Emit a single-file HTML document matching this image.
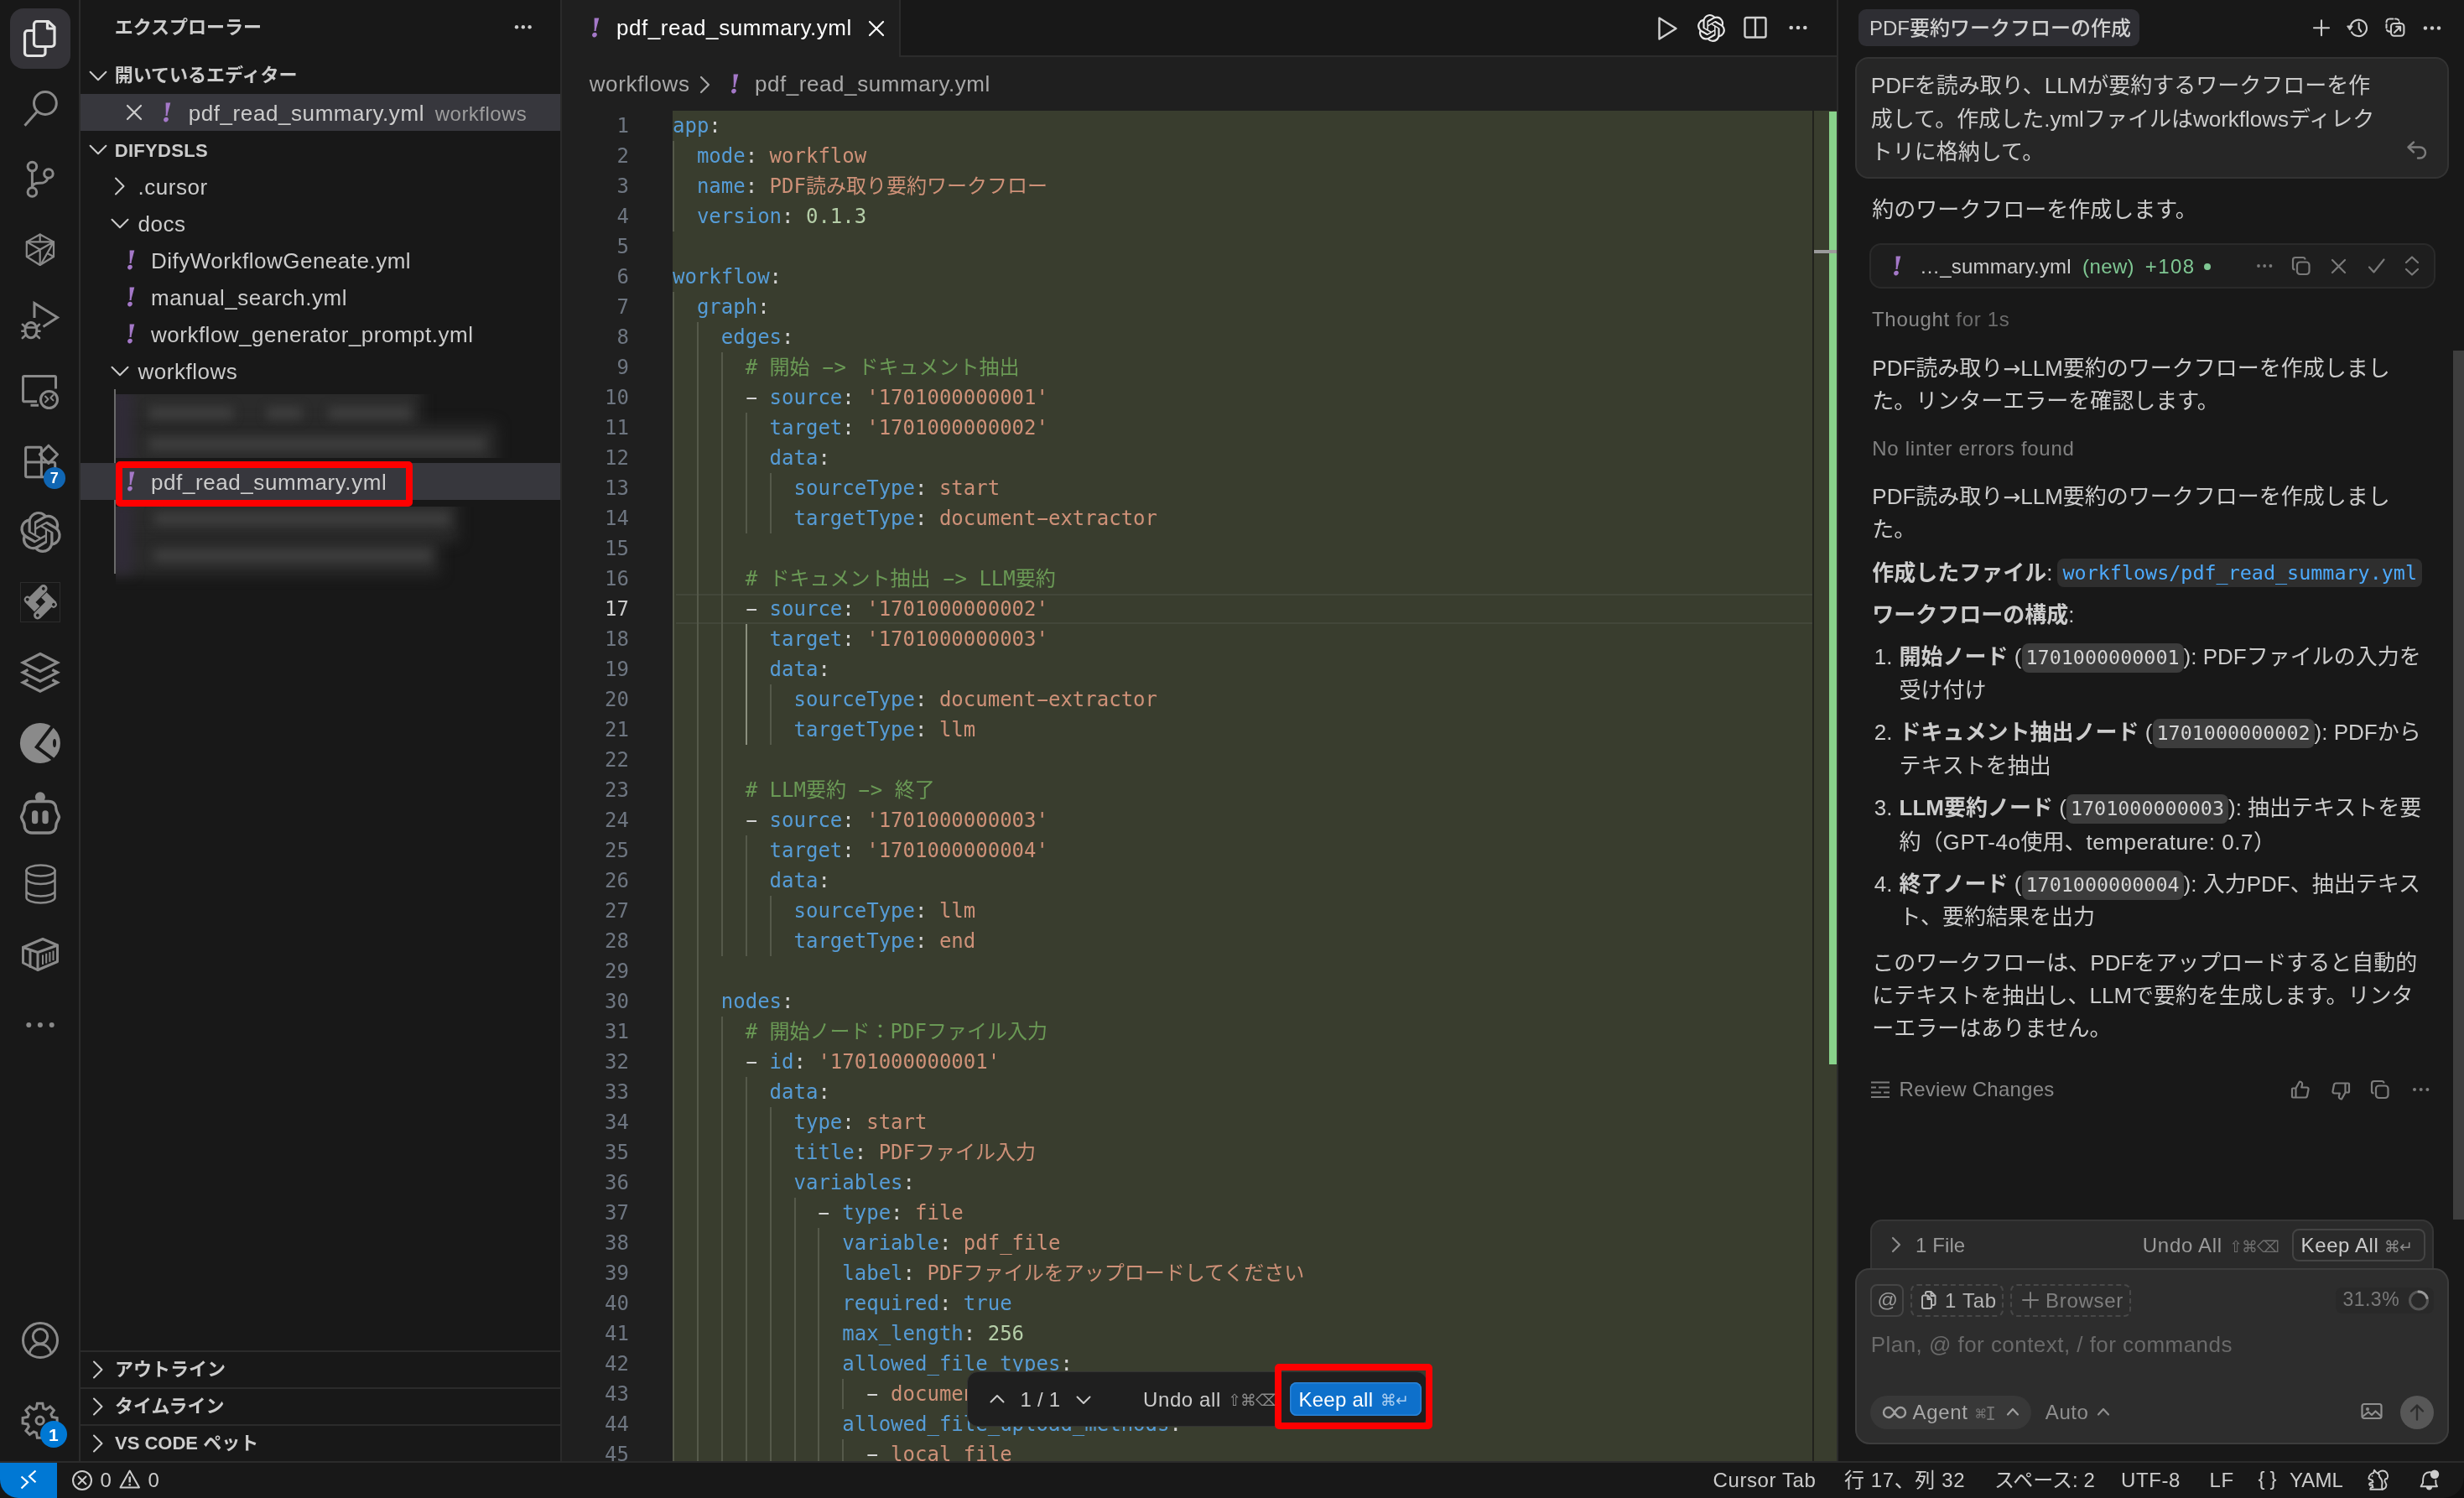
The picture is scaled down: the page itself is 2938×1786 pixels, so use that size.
<!DOCTYPE html>
<html lang="ja"><head><meta charset="utf-8"><title>pdf_read_summary.yml</title>
<style>
*{box-sizing:border-box;margin:0;padding:0}
html,body{width:2938px;height:1786px;overflow:hidden;background:#181818}
body{position:relative;font-family:"Liberation Sans","Noto Sans CJK JP",sans-serif;color:#ccc;font-size:26px;-webkit-font-smoothing:antialiased}
.abs,.abs>*{position:absolute}
i{display:block;font-style:normal}
svg{position:absolute;overflow:visible}
.t{position:absolute;white-space:pre;line-height:1}
/* panels */
#root{position:absolute;left:0;top:0;width:2938px;height:1786px;will-change:transform;background:#181818}
#act{position:absolute;left:0;top:0;width:94px;height:1744px;background:#181818}
#vb1{position:absolute;left:94px;top:0;width:2px;height:1744px;background:#2b2b2b}
#side{position:absolute;left:96px;top:0;width:572px;height:1744px;background:#181818}
#vb2{position:absolute;left:668px;top:0;width:2px;height:1744px;background:#2b2b2b}
#ed{position:absolute;left:670px;top:0;width:1520px;height:1744px;background:#1f1f1f;overflow:hidden}
#vb3{position:absolute;left:2190px;top:0;width:2px;height:1744px;background:#2b2b2b}
#chat{position:absolute;left:2192px;top:0;width:746px;height:1744px;background:#181818;overflow:hidden}
#status{position:absolute;left:0;top:1742px;width:2938px;height:44px;background:#181818;border-top:2px solid #2b2b2b}
/* activity */
#act .sel{position:absolute;left:12px;top:10px;width:72px;height:72px;border-radius:16px;background:#343338}
#act svg{fill:none;stroke:#8a8a8a;stroke-width:3;stroke-linecap:round;stroke-linejoin:round}
.badge{position:absolute;border-radius:50%;background:#0b6fd0;color:#fff;font-weight:700;text-align:center}
/* sidebar */
#side .row{position:absolute;left:0;width:572px;height:44px}
#side .hl{background:#37373d}
#side .lbl{position:absolute;white-space:pre;font-size:26px;line-height:46px;color:#ccc;letter-spacing:.5px}
#side .hd{position:absolute;white-space:pre;font-size:22px;line-height:44px;font-weight:700;color:#ccc}
#side .hb{position:absolute;left:0;width:572px;height:2px;background:#2b2b2b}
.yi{position:absolute;font-family:"DejaVu Serif","Liberation Serif",serif;font-style:italic;font-weight:700;color:#a478c8;font-size:31px;line-height:44px;width:20px;text-align:center;transform:skewX(4deg)}
.chev{stroke:#ccc;stroke-width:2;fill:none;stroke-linecap:round;stroke-linejoin:round}
/* editor */
#tabbar{position:absolute;left:0;top:0;width:1520px;height:68px;background:#181818;border-bottom:2px solid #2b2b2b}
#tab{position:absolute;left:0;top:0;width:404px;height:68px;background:#1f1f1f;border-right:2px solid #2b2b2b}
#greenbg{position:absolute;left:132px;top:132px;width:1359px;height:1612px;background:#393d2e}
#ruler{position:absolute;left:1492px;top:132px;width:28px;height:1612px;background:#393d2e;border-left:1.500px solid #22241b}
#gbar{position:absolute;left:1510.500px;top:133px;width:9.500px;height:1136px;background:#88d28b}
#curmark{position:absolute;left:1493px;top:298px;width:27px;height:4px;background:#9b9b9b}
#curline{position:absolute;left:136px;top:708px;width:1355px;height:36px;border-top:2px solid #43473a;border-bottom:2px solid #43473a}
.ln{position:absolute;left:0;width:80px;height:36px;line-height:36px;text-align:right;font-family:"DejaVu Sans Mono","Liberation Mono","Noto Sans CJK JP",monospace;font-size:24px;color:#6e7681;white-space:pre}
.ln.cur{color:#ccc}
.cl{position:absolute;left:132px;height:36px;line-height:36px;font-family:"DejaVu Sans Mono","Liberation Mono","Noto Sans CJK JP",monospace;font-size:24px;color:#d4d4d4;white-space:pre}
.k{color:#569cd6}.s{color:#ce9178}.n{color:#b5cea8}.c{color:#6a9955}.p{color:#d4d4d4}
.g{position:absolute;width:2px;background:#55594a}
.g.ga{background:#8b8f7e}
/* chat */
.tj{margin-top:-.09em}
#chat b{font-weight:700}
.ic{font-family:"DejaVu Sans Mono","Liberation Mono",monospace;font-size:23.400px;color:#d4d4d4;background:#3c3c3c;border-radius:8px;padding:3px 5px 4px;margin:0}
.la{letter-spacing:.550px}
.ar{font-family:"DejaVu Sans","Liberation Sans",sans-serif;font-size:25px;line-height:0}
.hy{display:inline-block;transform:scaleX(1.9)}

</style></head>
<body>
<div id="root">
<div id="act">
<i class="sel"></i>
<!-- files -->
<svg style="left:0;top:0" width="94" height="94" viewBox="0 0 94 94"><g style="stroke:#e2e2e2;stroke-width:3.2">
<path d="M40.5 36.5H33a3.5 3.5 0 0 0-3.500 3.500V63a3.500 3.500 0 0 0 3.500 3.500h17.500a3.500 3.500 0 0 0 3.500-3.500V56"/>
<path d="M44 25.500h13.500l7.500 7v19.500a3.500 3.500 0 0 1-3.500 3.500H44a3.500 3.500 0 0 1-3.500-3.500V29a3.500 3.500 0 0 1 3.500-3.500z"/>
<path d="M56.500 26v8h8"/></g></svg>
<!-- search -->
<svg style="left:0;top:84px" width="94" height="84" viewBox="0 84 94 84"><circle cx="53.900" cy="123" r="13.400"/><path d="M44.200 133.200L29.500 149.800" style="stroke-linecap:butt"/></svg>
<!-- scm -->
<svg style="left:0;top:168px" width="94" height="84" viewBox="0 168 94 84"><circle cx="38.400" cy="198.600" r="5.300"/><circle cx="38.400" cy="229" r="5.300"/><circle cx="57.900" cy="207" r="5.300"/><path d="M38.400 204v19.500M57 212.500c-1.500 5-5 5.800-10 5.800s-8 1-8.600 4.700"/></svg>
<!-- cube -->
<svg style="left:0;top:252px" width="94" height="84" viewBox="0 252 94 84"><g style="stroke-width:2.200"><path d="M47.700 279.500L64 288.400V306L47.700 316L31.800 306V288.400z"/><path d="M31.800 288.400H64M47.700 279.500V288M31.800 288.400L47.700 297.500L64 288.400M33 306L64 288.400M47.700 297.500V316M64 288.400L50 313M57.300 302.500L64 306"/></g></svg>
<!-- debug -->
<svg style="left:0;top:336px" width="94" height="84" viewBox="0 336 94 84"><path d="M41 379V361.500L68.500 378.600L51.500 389.500" style="stroke-linecap:butt;stroke-linejoin:miter"/><ellipse cx="36.900" cy="393.600" rx="7" ry="9.200"/><path d="M30 390.500H44M26.800 386.800L30.300 390M26.300 394.800H29.500M26.800 403L30.500 399.600M47 386.800L43.500 390M47.500 394.800H44.300M47 403L43.300 399.600" style="stroke-width:2.600"/></svg>
<!-- remote explorer -->
<svg style="left:0;top:420px" width="94" height="84" viewBox="0 420 94 84"><path d="M44 478.800H29a1.500 1.500 0 0 1-1.500-1.500V450a1.500 1.500 0 0 1 1.500-1.500h36a1.500 1.500 0 0 1 1.500 1.500v13.500M36.500 483.300H46" style="stroke-linecap:butt"/><circle cx="58.500" cy="476.500" r="10"/><path d="M54 472.500L57.500 476L54 479.500M63.500 471L60.300 474.200L63.500 477.400" style="stroke-width:2"/></svg>
<!-- extensions -->
<svg style="left:0;top:504px" width="94" height="84" viewBox="0 504 94 84"><path d="M49.400 551V535a1.700 1.700 0 0 0-1.700-1.700H32.300a1.700 1.700 0 0 0-1.700 1.700V567a1.700 1.700 0 0 0 1.700 1.700H64a1.700 1.700 0 0 0 1.700-1.700V552.700a1.700 1.700 0 0 0-1.700-1.700H30.600M49.400 551V568.700"/><path d="M57.900 531.200L68.500 541.800L57.900 552.400L47.300 541.800z"/></svg>
<i class="badge" style="left:52px;top:557.400px;width:25.600px;height:25.600px;background:#1066b3;font-size:18px;line-height:26px">7</i>
<!-- openai -->
<svg style="left:23.500px;top:609.500px" width="49" height="49" viewBox="0 0 24 24"><path style="fill:#8a8a8a;stroke:none" d="M22.2819 9.8211a5.9847 5.9847 0 0 0-.5157-4.9108 6.0462 6.0462 0 0 0-6.5098-2.9A6.0651 6.0651 0 0 0 4.9807 4.1818a5.9847 5.9847 0 0 0-3.9977 2.9 6.0462 6.0462 0 0 0 .7427 7.0966 5.98 5.98 0 0 0 .511 4.9107 6.051 6.051 0 0 0 6.5146 2.9001A5.9847 5.9847 0 0 0 13.2599 24a6.0557 6.0557 0 0 0 5.7718-4.2058 5.9894 5.9894 0 0 0 3.9977-2.9001 6.0557 6.0557 0 0 0-.7475-7.0729zm-9.022 12.6081a4.4755 4.4755 0 0 1-2.8764-1.0408l.1419-.0804 4.7783-2.7582a.7948.7948 0 0 0 .3927-.6813v-6.7369l2.02 1.1686a.071.071 0 0 1 .038.052v5.5826a4.504 4.504 0 0 1-4.4945 4.4944zm-9.6607-4.1254a4.4708 4.4708 0 0 1-.5346-3.0137l.142.0852 4.783 2.7582a.7712.7712 0 0 0 .7806 0l5.8428-3.3685v2.3324a.0804.0804 0 0 1-.0332.0615L9.74 19.9502a4.4992 4.4992 0 0 1-6.1408-1.6464zM2.3408 7.8956a4.485 4.485 0 0 1 2.3655-1.9728V11.6a.7664.7664 0 0 0 .3879.6765l5.8144 3.3543-2.0201 1.1685a.0757.0757 0 0 1-.071 0l-4.8303-2.7865A4.504 4.504 0 0 1 2.3408 7.872zm16.5963 3.8558L13.1038 8.364 15.1192 7.2a.0757.0757 0 0 1 .071 0l4.8303 2.7913a4.4944 4.4944 0 0 1-.6765 8.1042v-5.6772a.79.79 0 0 0-.407-.667zm2.0107-3.0231l-.142-.0852-4.7735-2.7818a.7759.7759 0 0 0-.7854 0L9.409 9.2297V6.8974a.0662.0662 0 0 1 .0284-.0615l4.8303-2.7866a4.4992 4.4992 0 0 1 6.6802 4.66zM8.3065 12.863l-2.02-1.1638a.0804.0804 0 0 1-.038-.0567V6.0742a4.4992 4.4992 0 0 1 7.3757-3.4537l-.142.0805L8.704 5.459a.7948.7948 0 0 0-.3927.6813zm1.0976-2.3654l2.602-1.4998 2.6069 1.4998v2.9994l-2.5974 1.4997-2.6067-1.4997Z"/></svg>
<!-- git-ish -->
<i style="position:absolute;left:24px;top:694px;width:48px;height:48px;border:1px solid #2c2c2c"></i>
<svg style="left:0;top:672px" width="94" height="84" viewBox="0 672 94 84"><g transform="translate(48.300 717.700) rotate(45)" style="stroke:none"><g fill="#878787"><path id="gA" d="M-13.600 -13.700A4.800 4.800 0 0 1 -4 -13.700V4.300H3V13.300H-13.600z"/><circle cx="-13.200" cy="8.900" r="3.900"/><g transform="rotate(180)"><path d="M-13.600 -13.700A4.800 4.800 0 0 1 -4 -13.700V4.300H3V13.300H-13.600z"/><circle cx="-13.200" cy="8.900" r="3.900"/></g></g><g fill="#181818"><circle cx="-8.800" cy="-13.700" r="1.900"/><circle cx="-13.200" cy="8.900" r="1.900"/><circle cx="8.800" cy="13.700" r="1.900"/><circle cx="13.200" cy="-8.900" r="1.900"/></g></g></svg>
<!-- layers -->
<svg style="left:0;top:756px" width="94" height="84" viewBox="0 756 94 84"><g style="stroke-width:3.200;stroke-linejoin:miter;stroke-linecap:butt"><path d="M47.900 779.500L68.500 790L47.900 800.500L27.300 790z"/><path d="M33.500 798.500L27.300 801.800L47.900 812.300L68.500 801.800L62.300 798.500"/><path d="M33.500 810.500L27.300 813.800L47.900 824.300L68.500 813.800L62.300 810.500"/></g></svg>
<!-- pie -->
<svg style="left:0;top:840px" width="94" height="84" viewBox="0 840 94 84"><circle cx="47.900" cy="886" r="24" style="fill:#8a8a8a;stroke:none"/><path d="M62.500 866L43.800 890.500L63 905" style="stroke:#181818;stroke-width:4;stroke-linecap:butt;stroke-linejoin:miter"/><ellipse cx="65" cy="886" rx="2" ry="5" style="fill:#181818;stroke:none"/></svg>
<!-- robot -->
<svg style="left:0;top:924px" width="94" height="84" viewBox="0 924 94 84"><path d="M38 955.500H58c6 0 9 4 9 9.500c0 3 3 6 3.500 9.300c-.5 3.300-3.500 6-3.500 9c0 5.500-3 9.700-9 9.700H38c-6 0-9-4.200-9-9.700c0-3-3-5.700-3.500-9c.5-3.300 3.500-6.300 3.500-9.300c0-5.500 3-9.500 9-9.500z" style="stroke-width:3.400"/><circle cx="47.900" cy="950.200" r="6" style="fill:#8a8a8a;stroke:none"/><rect x="38" y="966.300" width="7.300" height="16" rx="3.600" style="fill:#8a8a8a;stroke:none"/><rect x="50.400" y="966.300" width="7.300" height="16" rx="3.600" style="fill:#8a8a8a;stroke:none"/></svg>
<!-- database -->
<svg style="left:0;top:1008px" width="94" height="84" viewBox="0 1008 94 84"><g style="stroke-width:2.500"><ellipse cx="48.500" cy="1038" rx="17" ry="6.500"/><path d="M31.500 1038V1070c0 3.600 7.600 6.500 17 6.500s17-2.900 17-6.500V1038M31.500 1047.500c0 3.600 7.600 6.500 17 6.500s17-2.900 17-6.500M31.500 1062c0 3.600 7.600 6.500 17 6.500s17-2.900 17-6.500"/></g></svg>
<!-- container -->
<svg style="left:0;top:1092px" width="94" height="84" viewBox="0 1092 94 84"><g style="stroke-width:3"><path d="M51 1119.500L68.500 1127V1146.500L45 1156.500L27.500 1148V1129.500z"/><path d="M27.500 1129.500L45 1135.500L68.500 1127M45 1135.500V1156.500M36 1132.500V1152.500"/></g><path d="M51 1138.500V1150M55.200 1136.800V1148.500M59.400 1135V1146.800M63.500 1133.500V1145" style="stroke-width:2;stroke-linecap:butt"/></svg>
<!-- dots -->
<svg style="left:0;top:1176px" width="94" height="84" viewBox="0 1176 94 84"><g style="fill:#8a8a8a;stroke:none"><circle cx="34.300" cy="1222" r="3"/><circle cx="47.900" cy="1222" r="3"/><circle cx="61.700" cy="1222" r="3"/></g></svg>
<!-- account -->
<svg style="left:0;top:1556px" width="94" height="84" viewBox="0 1556 94 84"><circle cx="48" cy="1598" r="20.500"/><circle cx="48" cy="1593.300" r="8.700"/><path d="M35 1613.500c1.500-6.500 6.500-10.700 13-10.700s11.500 4.200 13 10.700"/></svg>
<!-- gear -->
<svg style="left:0;top:1650px" width="94" height="88" viewBox="0 1650 94 88"><g transform="translate(47.600 1693.700)"><path style="stroke-width:3;stroke-linejoin:miter" d="M-3.200 -20.500H3.200L4.200 -14.600L7.400 -13.300L12.200 -16.700L16.700 -12.200L13.300 -7.400L14.600 -4.200L20.500 -3.200V3.200L14.600 4.200L13.300 7.400L16.700 12.200L12.200 16.700L7.400 13.300L4.200 14.600L3.200 20.500H-3.200L-4.200 14.600L-7.400 13.300L-12.200 16.700L-16.700 12.200L-13.300 7.400L-14.600 4.200L-20.500 3.200V-3.200L-14.600 -4.200L-13.300 -7.400L-16.700 -12.200L-12.200 -16.700L-7.400 -13.300L-4.200 -14.600z"/><circle r="4.600" style="stroke-width:3"/></g></svg>
<i class="badge" style="left:47.800px;top:1694px;width:32px;height:32px;background:#0078d4;font-size:21px;line-height:33px">1</i>
</div>
<i id="vb1"></i>
<div id="side">
<span class="t" style="left:40.700px;top:22px;font-size:22px;color:#ccc;font-weight:700">エクスプローラー</span>
<svg style="left:515px;top:27px" width="26" height="10" viewBox="0 0 26 10"><g fill="#ccc"><circle cx="5" cy="5.300" r="2.200"/><circle cx="12.800" cy="5.300" r="2.200"/><circle cx="20.600" cy="5.300" r="2.200"/></g></svg>
<!-- open editors -->
<svg class="chev" style="left:10px;top:80px" width="22" height="20" viewBox="0 0 22 20"><path d="M1.600 5.800L11 15.200L20.400 5.800"/></svg>
<span class="hd" style="left:40.700px;top:68px">開いているエディター</span>
<div class="row hl" style="top:112px"></div>
<svg class="chev" style="left:54px;top:124px;stroke-width:2.200" width="20" height="20" viewBox="0 0 20 20"><path d="M2 2L18 18M18 2L2 18"/></svg>
<span class="yi" style="left:93px;top:112px">!</span>
<span class="lbl" style="left:128.700px;top:112px;letter-spacing:.580px">pdf_read_summary.yml</span>
<span class="lbl" style="left:422.800px;top:113px;font-size:24px;color:#9d9d9d;letter-spacing:.450px">workflows</span>
<!-- folder header -->
<svg class="chev" style="left:10px;top:168px" width="22" height="20" viewBox="0 0 22 20"><path d="M1.600 5.800L11 15.200L20.400 5.800"/></svg>
<span class="hd" style="left:40.700px;top:158px;letter-spacing:.300px">DIFYDSLS</span>
<!-- tree -->
<svg class="chev" style="left:38px;top:210px" width="20" height="24" viewBox="0 0 20 24"><path d="M4 2.500L13.500 12L4 21.500"/></svg>
<span class="lbl" style="left:68.600px;top:200px">.cursor</span>
<svg class="chev" style="left:35px;top:256px" width="24" height="20" viewBox="0 0 24 20"><path d="M2.500 5.800L12 15.300L21.500 5.800"/></svg>
<span class="lbl" style="left:68.600px;top:244px">docs</span>
<span class="yi" style="left:50px;top:288px">!</span><span class="lbl" style="left:84px;top:288px">DifyWorkflowGeneate.yml</span>
<span class="yi" style="left:50px;top:332px">!</span><span class="lbl" style="left:84px;top:332px">manual_search.yml</span>
<span class="yi" style="left:50px;top:376px">!</span><span class="lbl" style="left:84px;top:376px">workflow_generator_prompt.yml</span>
<svg class="chev" style="left:35px;top:432px" width="24" height="20" viewBox="0 0 24 20"><path d="M2.500 5.800L12 15.300L21.500 5.800"/></svg>
<span class="lbl" style="left:68.600px;top:420px">workflows</span>
<!-- blurred rows -->
<div style="position:absolute;left:42px;top:470px;width:520px;height:76px;overflow:hidden">
<i style="position:absolute;left:-20px;top:-14px;width:384px;height:56px;background:#2b2b2b;filter:blur(8px)"></i>
<i style="position:absolute;left:-20px;top:36px;width:474px;height:56px;background:#2b2b2b;filter:blur(8px)"></i>
<i style="position:absolute;left:-6px;top:-6px;width:26px;height:90px;background:#302b37;filter:blur(7px)"></i>
<i style="position:absolute;left:40px;top:15px;width:100px;height:15px;background:#3e3e3e;filter:blur(6px)"></i>
<i style="position:absolute;left:180px;top:15px;width:42px;height:15px;background:#3e3e3e;filter:blur(6px)"></i>
<i style="position:absolute;left:254px;top:15px;width:98px;height:15px;background:#3e3e3e;filter:blur(6px)"></i>
<i style="position:absolute;left:40px;top:52px;width:400px;height:15px;background:#3e3e3e;filter:blur(6px)"></i>
</div>
<div style="position:absolute;left:42px;top:604px;width:520px;height:100px;overflow:hidden">
<i style="position:absolute;left:-20px;top:-14px;width:428px;height:56px;background:#2b2b2b;filter:blur(8px)"></i>
<i style="position:absolute;left:-20px;top:36px;width:406px;height:46px;background:#2b2b2b;filter:blur(8px)"></i>
<i style="position:absolute;left:-6px;top:-6px;width:26px;height:86px;background:#302b37;filter:blur(7px)"></i>
<i style="position:absolute;left:46px;top:7px;width:352px;height:15px;background:#3e3e3e;filter:blur(6px)"></i>
<i style="position:absolute;left:46px;top:51px;width:330px;height:15px;background:#3e3e3e;filter:blur(6px)"></i>
</div>
<i style="position:absolute;left:40px;top:464px;width:2px;height:220px;background:#6a6a6a"></i>
<div class="row hl" style="top:552px"></div>
<span class="yi" style="left:50px;top:552px">!</span><span class="lbl" style="left:84px;top:552px;letter-spacing:.580px">pdf_read_summary.yml</span>
<i style="position:absolute;left:42px;top:550px;width:354px;height:54px;border:8px solid #fe0000;border-radius:5px"></i>
<!-- bottom sections -->
<i class="hb" style="top:1610px"></i><i class="hb" style="top:1654px"></i><i class="hb" style="top:1698px"></i>
<svg class="chev" style="left:11px;top:1621px" width="20" height="24" viewBox="0 0 20 24"><path d="M5 2.500L14.500 12L5 21.500"/></svg>
<span class="hd" style="left:41px;top:1611px">アウトライン</span>
<svg class="chev" style="left:11px;top:1665px" width="20" height="24" viewBox="0 0 20 24"><path d="M5 2.500L14.500 12L5 21.500"/></svg>
<span class="hd" style="left:41px;top:1655px">タイムライン</span>
<svg class="chev" style="left:11px;top:1709px" width="20" height="24" viewBox="0 0 20 24"><path d="M5 2.500L14.500 12L5 21.500"/></svg>
<span class="hd" style="left:41px;top:1699px">VS CODE ペット</span>
</div>
<i id="vb2"></i>
<div id="ed">
<div id="tabbar"><div id="tab"></div></div>
<i style="position:absolute;left:0;top:66px;width:402px;height:2px;background:#1f1f1f"></i>
<span class="yi" style="left:29.500px;top:11px">!</span>
<span class="t" style="left:65px;top:20px;font-size:26px;color:#fff;letter-spacing:.560px">pdf_read_summary.yml</span>
<svg class="chev" style="left:365px;top:24px;stroke:#fff;stroke-width:2.200" width="20" height="20" viewBox="0 0 20 20"><path d="M2 2L18 18M18 2L2 18"/></svg>
<!-- toolbar -->
<svg style="left:1304px;top:19px;fill:none;stroke:#d0d0d0;stroke-width:2.400;stroke-linejoin:round" width="28" height="30" viewBox="0 0 28 30"><path d="M4.500 2.500V27.500L24.500 15z"/></svg>
<svg style="left:1353.500px;top:16.500px" width="33" height="33" viewBox="0 0 24 24"><path fill="#e8e8e8" d="M22.2819 9.8211a5.9847 5.9847 0 0 0-.5157-4.9108 6.0462 6.0462 0 0 0-6.5098-2.9A6.0651 6.0651 0 0 0 4.9807 4.1818a5.9847 5.9847 0 0 0-3.9977 2.9 6.0462 6.0462 0 0 0 .7427 7.0966 5.98 5.98 0 0 0 .511 4.9107 6.051 6.051 0 0 0 6.5146 2.9001A5.9847 5.9847 0 0 0 13.2599 24a6.0557 6.0557 0 0 0 5.7718-4.2058 5.9894 5.9894 0 0 0 3.9977-2.9001 6.0557 6.0557 0 0 0-.7475-7.0729zm-9.022 12.6081a4.4755 4.4755 0 0 1-2.8764-1.0408l.1419-.0804 4.7783-2.7582a.7948.7948 0 0 0 .3927-.6813v-6.7369l2.02 1.1686a.071.071 0 0 1 .038.052v5.5826a4.504 4.504 0 0 1-4.4945 4.4944zm-9.6607-4.1254a4.4708 4.4708 0 0 1-.5346-3.0137l.142.0852 4.783 2.7582a.7712.7712 0 0 0 .7806 0l5.8428-3.3685v2.3324a.0804.0804 0 0 1-.0332.0615L9.74 19.9502a4.4992 4.4992 0 0 1-6.1408-1.6464zM2.3408 7.8956a4.485 4.485 0 0 1 2.3655-1.9728V11.6a.7664.7664 0 0 0 .3879.6765l5.8144 3.3543-2.0201 1.1685a.0757.0757 0 0 1-.071 0l-4.8303-2.7865A4.504 4.504 0 0 1 2.3408 7.872zm16.5963 3.8558L13.1038 8.364 15.1192 7.2a.0757.0757 0 0 1 .071 0l4.8303 2.7913a4.4944 4.4944 0 0 1-.6765 8.1042v-5.6772a.79.79 0 0 0-.407-.667zm2.0107-3.0231l-.142-.0852-4.7735-2.7818a.7759.7759 0 0 0-.7854 0L9.409 9.2297V6.8974a.0662.0662 0 0 1 .0284-.0615l4.8303-2.7866a4.4992 4.4992 0 0 1 6.6802 4.66zM8.3065 12.863l-2.02-1.1638a.0804.0804 0 0 1-.038-.0567V6.0742a4.4992 4.4992 0 0 1 7.3757-3.4537l-.142.0805L8.704 5.459a.7948.7948 0 0 0-.3927.6813zm1.0976-2.3654l2.602-1.4998 2.6069 1.4998v2.9994l-2.5974 1.4997-2.6067-1.4997Z"/></svg>
<svg style="left:1409px;top:19px;fill:none;stroke:#d0d0d0;stroke-width:2.400;stroke-linejoin:round" width="28" height="28" viewBox="0 0 28 28"><rect x="1.500" y="2" width="25" height="23.500" rx="2"/><path d="M14 2V25.500"/></svg>
<svg style="left:1462px;top:29px" width="24" height="8" viewBox="0 0 24 8"><g fill="#d0d0d0"><circle cx="3.700" cy="4" r="2.300"/><circle cx="12" cy="4" r="2.300"/><circle cx="20.300" cy="4" r="2.300"/></g></svg>
<!-- breadcrumbs -->
<span class="t" style="left:32.700px;top:87px;font-size:26px;color:#a9a9a9;letter-spacing:.650px">workflows</span>
<svg class="chev" style="left:163px;top:89px;stroke:#a9a9a9;stroke-width:2.200" width="16" height="24" viewBox="0 0 16 24"><path d="M3 3L12 12L3 21"/></svg>
<span class="yi" style="left:195.500px;top:78px">!</span>
<span class="t" style="left:230px;top:87px;font-size:26px;color:#a9a9a9;letter-spacing:.560px">pdf_read_summary.yml</span>
<!-- code -->
<i id="greenbg"></i><i id="ruler"></i><i id="gbar"></i><i id="curmark"></i><i id="curline"></i>
<i class="g" style="left:132.0px;top:168px;height:108px"></i>
<i class="g" style="left:132.0px;top:348px;height:1440px"></i>
<i class="g" style="left:160.9px;top:384px;height:1404px"></i>
<i class="g" style="left:189.8px;top:420px;height:720px"></i>
<i class="g" style="left:189.8px;top:1212px;height:576px"></i>
<i class="g" style="left:218.7px;top:492px;height:144px"></i>
<i class="g" style="left:247.6px;top:564px;height:72px"></i>
<i class="g ga" style="left:218.7px;top:744px;height:144px"></i>
<i class="g" style="left:247.6px;top:816px;height:72px"></i>
<i class="g" style="left:218.7px;top:996px;height:144px"></i>
<i class="g" style="left:247.6px;top:1068px;height:72px"></i>
<i class="g" style="left:218.7px;top:1284px;height:504px"></i>
<i class="g" style="left:247.6px;top:1320px;height:468px"></i>
<i class="g" style="left:276.5px;top:1428px;height:360px"></i>
<i class="g" style="left:305.4px;top:1464px;height:324px"></i>
<i class="g" style="left:334.3px;top:1644px;height:36px"></i>
<i class="g" style="left:334.3px;top:1716px;height:72px"></i>
<div class="ln" style="top:132px">1</div>
<div class="cl" style="top:132px"><span class="k">app</span><span class="p">:</span></div>
<div class="ln" style="top:168px">2</div>
<div class="cl" style="top:168px">  <span class="k">mode</span><span class="p">:</span> <span class="s">workflow</span></div>
<div class="ln" style="top:204px">3</div>
<div class="cl" style="top:204px">  <span class="k">name</span><span class="p">:</span> <span class="s">PDF読み取り要約ワークフロー</span></div>
<div class="ln" style="top:240px">4</div>
<div class="cl" style="top:240px">  <span class="k">version</span><span class="p">:</span> <span class="n">0.1.3</span></div>
<div class="ln" style="top:276px">5</div>
<div class="cl" style="top:276px"></div>
<div class="ln" style="top:312px">6</div>
<div class="cl" style="top:312px"><span class="k">workflow</span><span class="p">:</span></div>
<div class="ln" style="top:348px">7</div>
<div class="cl" style="top:348px">  <span class="k">graph</span><span class="p">:</span></div>
<div class="ln" style="top:384px">8</div>
<div class="cl" style="top:384px">    <span class="k">edges</span><span class="p">:</span></div>
<div class="ln" style="top:420px">9</div>
<div class="cl" style="top:420px">      <span class="c"># 開始 <span class="hy">-</span>&gt; ドキュメント抽出</span></div>
<div class="ln" style="top:456px">10</div>
<div class="cl" style="top:456px">      <span class="p"><span class="hy">-</span> </span><span class="k">source</span><span class="p">:</span> <span class="s">&#x27;1701000000001&#x27;</span></div>
<div class="ln" style="top:492px">11</div>
<div class="cl" style="top:492px">        <span class="k">target</span><span class="p">:</span> <span class="s">&#x27;1701000000002&#x27;</span></div>
<div class="ln" style="top:528px">12</div>
<div class="cl" style="top:528px">        <span class="k">data</span><span class="p">:</span></div>
<div class="ln" style="top:564px">13</div>
<div class="cl" style="top:564px">          <span class="k">sourceType</span><span class="p">:</span> <span class="s">start</span></div>
<div class="ln" style="top:600px">14</div>
<div class="cl" style="top:600px">          <span class="k">targetType</span><span class="p">:</span> <span class="s">document<span class="hy">-</span>extractor</span></div>
<div class="ln" style="top:636px">15</div>
<div class="cl" style="top:636px"></div>
<div class="ln" style="top:672px">16</div>
<div class="cl" style="top:672px">      <span class="c"># ドキュメント抽出 <span class="hy">-</span>&gt; LLM要約</span></div>
<div class="ln cur" style="top:708px">17</div>
<div class="cl" style="top:708px">      <span class="p"><span class="hy">-</span> </span><span class="k">source</span><span class="p">:</span> <span class="s">&#x27;1701000000002&#x27;</span></div>
<div class="ln" style="top:744px">18</div>
<div class="cl" style="top:744px">        <span class="k">target</span><span class="p">:</span> <span class="s">&#x27;1701000000003&#x27;</span></div>
<div class="ln" style="top:780px">19</div>
<div class="cl" style="top:780px">        <span class="k">data</span><span class="p">:</span></div>
<div class="ln" style="top:816px">20</div>
<div class="cl" style="top:816px">          <span class="k">sourceType</span><span class="p">:</span> <span class="s">document<span class="hy">-</span>extractor</span></div>
<div class="ln" style="top:852px">21</div>
<div class="cl" style="top:852px">          <span class="k">targetType</span><span class="p">:</span> <span class="s">llm</span></div>
<div class="ln" style="top:888px">22</div>
<div class="cl" style="top:888px"></div>
<div class="ln" style="top:924px">23</div>
<div class="cl" style="top:924px">      <span class="c"># LLM要約 <span class="hy">-</span>&gt; 終了</span></div>
<div class="ln" style="top:960px">24</div>
<div class="cl" style="top:960px">      <span class="p"><span class="hy">-</span> </span><span class="k">source</span><span class="p">:</span> <span class="s">&#x27;1701000000003&#x27;</span></div>
<div class="ln" style="top:996px">25</div>
<div class="cl" style="top:996px">        <span class="k">target</span><span class="p">:</span> <span class="s">&#x27;1701000000004&#x27;</span></div>
<div class="ln" style="top:1032px">26</div>
<div class="cl" style="top:1032px">        <span class="k">data</span><span class="p">:</span></div>
<div class="ln" style="top:1068px">27</div>
<div class="cl" style="top:1068px">          <span class="k">sourceType</span><span class="p">:</span> <span class="s">llm</span></div>
<div class="ln" style="top:1104px">28</div>
<div class="cl" style="top:1104px">          <span class="k">targetType</span><span class="p">:</span> <span class="s">end</span></div>
<div class="ln" style="top:1140px">29</div>
<div class="cl" style="top:1140px"></div>
<div class="ln" style="top:1176px">30</div>
<div class="cl" style="top:1176px">    <span class="k">nodes</span><span class="p">:</span></div>
<div class="ln" style="top:1212px">31</div>
<div class="cl" style="top:1212px">      <span class="c"># 開始ノード：PDFファイル入力</span></div>
<div class="ln" style="top:1248px">32</div>
<div class="cl" style="top:1248px">      <span class="p"><span class="hy">-</span> </span><span class="k">id</span><span class="p">:</span> <span class="s">&#x27;1701000000001&#x27;</span></div>
<div class="ln" style="top:1284px">33</div>
<div class="cl" style="top:1284px">        <span class="k">data</span><span class="p">:</span></div>
<div class="ln" style="top:1320px">34</div>
<div class="cl" style="top:1320px">          <span class="k">type</span><span class="p">:</span> <span class="s">start</span></div>
<div class="ln" style="top:1356px">35</div>
<div class="cl" style="top:1356px">          <span class="k">title</span><span class="p">:</span> <span class="s">PDFファイル入力</span></div>
<div class="ln" style="top:1392px">36</div>
<div class="cl" style="top:1392px">          <span class="k">variables</span><span class="p">:</span></div>
<div class="ln" style="top:1428px">37</div>
<div class="cl" style="top:1428px">            <span class="p"><span class="hy">-</span> </span><span class="k">type</span><span class="p">:</span> <span class="s">file</span></div>
<div class="ln" style="top:1464px">38</div>
<div class="cl" style="top:1464px">              <span class="k">variable</span><span class="p">:</span> <span class="s">pdf_file</span></div>
<div class="ln" style="top:1500px">39</div>
<div class="cl" style="top:1500px">              <span class="k">label</span><span class="p">:</span> <span class="s">PDFファイルをアップロードしてください</span></div>
<div class="ln" style="top:1536px">40</div>
<div class="cl" style="top:1536px">              <span class="k">required</span><span class="p">:</span> <span class="k">true</span></div>
<div class="ln" style="top:1572px">41</div>
<div class="cl" style="top:1572px">              <span class="k">max_length</span><span class="p">:</span> <span class="n">256</span></div>
<div class="ln" style="top:1608px">42</div>
<div class="cl" style="top:1608px">              <span class="k">allowed_file_types</span><span class="p">:</span></div>
<div class="ln" style="top:1644px">43</div>
<div class="cl" style="top:1644px">                <span class="p"><span class="hy">-</span> </span><span class="s">document</span></div>
<div class="ln" style="top:1680px">44</div>
<div class="cl" style="top:1680px">              <span class="k">allowed_file_upload_methods</span><span class="p">:</span></div>
<div class="ln" style="top:1716px">45</div>
<div class="cl" style="top:1716px">                <span class="p"><span class="hy">-</span> </span><span class="s">local_file</span></div>
<!-- floating bar -->
<div style="position:absolute;left:483px;top:1635px;width:549px;height:66px;background:#1f1f1f;border:1.500px solid #333;border-radius:13px"></div>
<svg class="chev" style="left:509px;top:1660px;stroke:#ccc;stroke-width:2" width="20" height="16" viewBox="0 0 20 16"><path d="M2.500 11.500L10 4L17.500 11.500"/></svg>
<span class="t" style="left:546.500px;top:1656.500px;font-size:24px;color:#ccc;letter-spacing:.200px">1 / 1</span>
<svg class="chev" style="left:612px;top:1661px;stroke:#ccc;stroke-width:2" width="20" height="16" viewBox="0 0 20 16"><path d="M2.500 4.500L10 12L17.500 4.500"/></svg>
<span class="t" style="left:693px;top:1657px;font-size:24px;color:#ccc;letter-spacing:.600px">Undo all</span>
<span class="t" style="left:794px;top:1660px;font-size:19px;color:#8a8a8a;font-family:'DejaVu Sans','Liberation Sans',sans-serif;letter-spacing:-1px">⇧⌘⌫</span>
<div style="position:absolute;left:868px;top:1648px;width:156.500px;height:40px;background:#0e70cb;border-radius:8px;box-shadow:inset 0 0 0 1.500px #2b83d6"></div>
<span class="t" style="left:878.500px;top:1657px;font-size:24px;color:#fff;letter-spacing:.250px">Keep all</span>
<span class="t" style="left:976px;top:1660px;font-size:19px;color:#a9cdf0;font-family:'DejaVu Sans','Liberation Sans',sans-serif;letter-spacing:-1px">⌘↵</span>
<i style="position:absolute;left:850px;top:1626px;width:188px;height:78px;border:8px solid #fe0000;border-radius:5px"></i>
</div>
<i id="vb3"></i>
<div id="chat">
<i style="position:absolute;left:24px;top:11px;width:335px;height:44px;border-radius:9px;background:#2e2e33"></i>
<span class="t tj" style="left:37.0px;top:23.9px;font-size:24px;color:#d0d0d0;font-weight:500;">PDF要約ワークフローの作成</span>
<svg style="left:0;top:0;fill:none;stroke:#ccc;stroke-width:2.100;stroke-linecap:round;stroke-linejoin:round" width="746" height="66" viewBox="0 0 746 66"><path d="M576 24.200V42.200M567 33.200H585"/><path d="M610.600 33.400A9.700 9.700 0 1 1 611.950 38.340"/><path d="M607 31H613.200L610 35.800z" fill="#ccc" stroke-width="1"/><path d="M620.700 27.300V33.600L623.300 37.600"/><rect x="653.500" y="22.500" width="15.300" height="15.100" rx="3.800" stroke-dasharray="4.200 2.600"/><rect x="659" y="28" width="15.400" height="14.800" rx="3.800" fill="#181818"/><path d="M663 38.800L670 31.900M665.300 31.800H670.100V36.600"/><g fill="#ccc" stroke="none"><circle cx="699.900" cy="33.400" r="2.250"/><circle cx="708" cy="33.400" r="2.250"/><circle cx="716" cy="33.400" r="2.250"/></g></svg>
<i style="position:absolute;left:20px;top:68px;width:708px;height:144.500px;border-radius:16px;background:#262626;border:2px solid #333"></i>
<span class="t tj" style="left:38.8px;top:91.5px;font-size:26px;color:#ccc;">PDFを読み取り、LLMが要約するワークフローを作</span>
<span class="t tj" style="left:38.8px;top:131.0px;font-size:26px;color:#ccc;">成して。作成した.ymlファイルはworkflowsディレク</span>
<span class="t tj" style="left:38.8px;top:170.0px;font-size:26px;color:#ccc;">トリに格納して。</span>
<svg style="left:677px;top:167px;fill:none;stroke:#7d7d7d;stroke-width:2.400;stroke-linecap:round;stroke-linejoin:round" width="26" height="24" viewBox="0 0 26 24"><path d="M9 2.500L2.500 8.500L9 14.500"/><path d="M3 8.500H16.500A6.500 6.500 0 0 1 16.500 21.500H14"/></svg>
<span class="t tj" style="left:40.3px;top:239.0px;font-size:26px;color:#ccc;">約のワークフローを作成します。</span>
<i style="position:absolute;left:36.500px;top:290px;width:675px;height:54px;border-radius:14px;background:#1e1e1e;border:2px solid #2a2a2a"></i>
<span class="yi" style="left:60px;top:295px">!</span>
<span class="t" style="left:97.0px;top:305.9px;font-size:24px;color:#ccc;letter-spacing:0.2px;">…_summary.yml</span>
<span class="t" style="left:291.0px;top:305.9px;font-size:24px;color:#7fc793;letter-spacing:0.4px;">(new)</span>
<span class="t" style="left:365.8px;top:305.9px;font-size:24px;color:#7fc793;letter-spacing:1.4px;">+108</span>
<i style="position:absolute;left:436px;top:313.500px;width:8px;height:8px;border-radius:50%;background:#7fc793"></i>
<svg style="left:497px;top:313px" width="24" height="8" viewBox="0 0 24 8"><g fill="#7a7a7a"><circle cx="4" cy="4" r="1.900"/><circle cx="11.200" cy="4" r="1.900"/><circle cx="18.400" cy="4" r="1.900"/></g></svg>
<svg style="left:540px;top:305px;fill:none;stroke:#7a7a7a;stroke-width:2.200;stroke-linejoin:round" width="24" height="24" viewBox="0 0 24 24"><rect x="7" y="7.500" width="14.500" height="14.500" rx="3.500"/><path d="M16.500 4.500V4.500A2.500 2.500 0 0 0 14 2H5A3 3 0 0 0 2 5V14A2.500 2.500 0 0 0 4.500 16.500"/></svg>
<svg style="left:587px;top:308px;fill:none;stroke:#7a7a7a;stroke-width:2.200;stroke-linecap:round" width="20" height="20" viewBox="0 0 20 20"><path d="M2 2L17 17M17 2L2 17"/></svg>
<svg style="left:631px;top:307px;fill:none;stroke:#7a7a7a;stroke-width:2.200;stroke-linecap:round;stroke-linejoin:round" width="22" height="20" viewBox="0 0 22 20"><path d="M2 11.500L7.500 17.500L19.500 2.500"/></svg>
<svg style="left:675px;top:304px;fill:none;stroke:#7a7a7a;stroke-width:2.200;stroke-linecap:round;stroke-linejoin:round" width="18" height="26" viewBox="0 0 18 26"><path d="M2 9L9 2.500L16 9M2 17L9 23.500L16 17"/></svg>
<span class="t" style="left:40.0px;top:368.9px;font-size:24px;color:#ccc;letter-spacing:0.7px;"><span style="color:#8a8a8a">Thought</span> <span style="color:#6c6c6c">for 1s</span></span>
<span class="t tj" style="left:40.3px;top:428.0px;font-size:26px;color:#ccc;">PDF読み取り<span class="ar">→</span>LLM要約のワークフローを作成しまし</span>
<span class="t tj" style="left:40.3px;top:467.0px;font-size:26px;color:#ccc;">た。リンターエラーを確認します。</span>
<span class="t" style="left:40.3px;top:523.4px;font-size:24px;color:#808080;letter-spacing:0.72px;">No linter errors found</span>
<span class="t tj" style="left:40.3px;top:581.5px;font-size:26px;color:#ccc;">PDF読み取り<span class="ar">→</span>LLM要約のワークフローを作成しまし</span>
<span class="t tj" style="left:40.3px;top:620.5px;font-size:26px;color:#ccc;">た。</span>
<span class="t tj" style="left:40.3px;top:672.5px;font-size:26px;color:#ccc;"><b>作成したファイル</b>:</span>
<i style="position:absolute;left:261px;top:666px;width:435px;height:33.500px;border-radius:8px;background:#2e2e2e"></i>
<span class="t" style="left:267.5px;top:672.2px;font-size:23.4px;color:#4daafc;font-family:'DejaVu Sans Mono','Liberation Mono',monospace;">workflows/pdf_read_summary.yml</span>
<span class="t tj" style="left:40.3px;top:722.3px;font-size:26px;color:#ccc;"><b>ワークフローの構成</b>:</span>
<span class="t" style="left:42.8px;top:770.0px;font-size:26px;color:#ccc;">1.</span>
<span class="t tj" style="left:72.6px;top:772.5px;font-size:26px;color:#ccc;"><b>開始ノード</b> (<span class="ic">1701000000001</span>): PDFファイルの入力を</span>
<span class="t tj" style="left:72.6px;top:812.0px;font-size:26px;color:#ccc;">受け付け</span>
<span class="t" style="left:42.8px;top:860.0px;font-size:26px;color:#ccc;">2.</span>
<span class="t tj" style="left:72.6px;top:862.5px;font-size:26px;color:#ccc;"><b>ドキュメント抽出ノード</b> (<span class="ic">1701000000002</span>): PDFから</span>
<span class="t tj" style="left:72.6px;top:902.5px;font-size:26px;color:#ccc;">テキストを抽出</span>
<span class="t" style="left:42.8px;top:950.0px;font-size:26px;color:#ccc;">3.</span>
<span class="t tj" style="left:72.6px;top:952.5px;font-size:26px;color:#ccc;"><b>LLM要約ノード</b> (<span class="ic">1701000000003</span>): 抽出テキストを要</span>
<span class="t tj" style="left:72.6px;top:993.0px;font-size:26px;color:#ccc;">約（<span class="la">GPT-4o</span>使用、<span class="la">temperature: 0.7</span>）</span>
<span class="t" style="left:42.8px;top:1040.5px;font-size:26px;color:#ccc;">4.</span>
<span class="t tj" style="left:72.6px;top:1043.0px;font-size:26px;color:#ccc;"><b>終了ノード</b> (<span class="ic">1701000000004</span>): 入力PDF、抽出テキス</span>
<span class="t tj" style="left:72.6px;top:1082.5px;font-size:26px;color:#ccc;">ト、要約結果を出力</span>
<span class="t tj" style="left:40.3px;top:1137.5px;font-size:26px;color:#ccc;">このワークフローは、PDFをアップロードすると自動的</span>
<span class="t tj" style="left:40.3px;top:1176.5px;font-size:26px;color:#ccc;">にテキストを抽出し、LLMで要約を生成します。リンタ</span>
<span class="t tj" style="left:40.3px;top:1215.5px;font-size:26px;color:#ccc;">ーエラーはありません。</span>
<svg style="left:38px;top:1288px;fill:none;stroke:#7d7d7d;stroke-width:2.200" width="24" height="22" viewBox="0 0 24 22"><path d="M1 2.500H23M1 8.500H7M10 8.500H23M1 14.500H13M16 14.500H23M1 20H23" style="stroke-width:2"/></svg>
<span class="t" style="left:72.6px;top:1287.4px;font-size:24px;color:#8a8a8a;letter-spacing:0.25px;">Review Changes</span>
<svg style="left:539px;top:1287px;fill:none;stroke:#7d7d7d;stroke-width:2.200;stroke-linecap:round;stroke-linejoin:round" width="24" height="24" viewBox="0 0 24 24"><path d="M6.500 10.500V21.500H3A1 1 0 0 1 2 20.500V11.500A1 1 0 0 1 3 10.500H6.500L11 2.500C13.500 2.500 14.500 4.500 14 6.500L13.200 9.500H19.500A2 2 0 0 1 21.500 12L20 19.500A2.500 2.500 0 0 1 17.500 21.500H6.500"/></svg>
<svg style="left:587px;top:1289px;fill:none;stroke:#7d7d7d;stroke-width:2.200;stroke-linecap:round;stroke-linejoin:round" width="24" height="24" viewBox="0 0 24 24"><g transform="rotate(180 12 12)"><path d="M6.500 10.500V21.500H3A1 1 0 0 1 2 20.500V11.500A1 1 0 0 1 3 10.500H6.500L11 2.500C13.500 2.500 14.500 4.500 14 6.500L13.200 9.500H19.500A2 2 0 0 1 21.500 12L20 19.500A2.500 2.500 0 0 1 17.500 21.500H6.500"/></g></svg>
<svg style="left:634px;top:1287px;fill:none;stroke:#7d7d7d;stroke-width:2.200;stroke-linejoin:round" width="24" height="24" viewBox="0 0 24 24"><rect x="7" y="7.500" width="14.500" height="14.500" rx="3.500"/><path d="M16.500 4.500V4.500A2.500 2.500 0 0 0 14 2H5A3 3 0 0 0 2 5V14A2.500 2.500 0 0 0 4.500 16.500"/></svg>
<svg style="left:684px;top:1295px" width="24" height="8" viewBox="0 0 24 8"><g fill="#7d7d7d"><circle cx="3" cy="4" r="2"/><circle cx="10.700" cy="4" r="2"/><circle cx="18.400" cy="4" r="2"/></g></svg>
<i style="position:absolute;left:732.500px;top:418px;width:13.500px;height:1036px;background:#3e3e3e"></i>
<i style="position:absolute;left:38px;top:1454px;width:672px;height:80px;border-radius:14px 14px 0 0;background:#2a2a2a;border:2px solid #363636"></i>
<svg class="chev" style="left:62px;top:1474px;stroke:#8f8f8f;stroke-width:2.200" width="14" height="20" viewBox="0 0 14 20"><path d="M3 2L11 10L3 18"/></svg>
<span class="t" style="left:92.0px;top:1473.4px;font-size:24px;color:#9a9a9a;letter-spacing:0.1px;">1 File</span>
<span class="t" style="left:362.8px;top:1473.4px;font-size:24px;color:#9a9a9a;letter-spacing:0.7px;">Undo All</span>
<span class="t" style="left:466.0px;top:1476.7px;font-size:19px;color:#6e6e6e;letter-spacing:-1px;font-family:'DejaVu Sans','Liberation Sans',sans-serif;">⇧⌘⌫</span>
<i style="position:absolute;left:541px;top:1464.500px;width:159px;height:39px;border-radius:8px;border:2px solid #444"></i>
<span class="t" style="left:551.6px;top:1473.4px;font-size:24px;color:#ccc;letter-spacing:0.6px;">Keep All</span>
<span class="t" style="left:651.0px;top:1476.7px;font-size:19px;color:#8a8a8a;letter-spacing:-1px;font-family:'DejaVu Sans','Liberation Sans',sans-serif;">⌘↵</span>
<i style="position:absolute;left:20px;top:1512px;width:708px;height:210px;border-radius:17px;background:#2d2d2d;border:2px solid #3d3d3d"></i>
<i style="position:absolute;left:38.400px;top:1530.500px;width:39.500px;height:39px;border-radius:8px;border:2px solid #454545"></i>
<span class="t" style="left:46.5px;top:1537.9px;font-size:24px;color:#9a9a9a;">@</span>
<i style="position:absolute;left:86px;top:1530.500px;width:111px;height:39px;border-radius:8px;border:2px dashed #484848"></i>
<svg style="left:98px;top:1538px;fill:none;stroke:#b5b5b5;stroke-width:2;stroke-linejoin:round" width="20" height="24" viewBox="0 0 20 24"><path d="M6 5.500V4A2 2 0 0 1 8 2H12.500L17.500 7V16A2 2 0 0 1 15.500 18H14M12.500 2V7H17.500"/><path d="M4 6.500H8.500L13 11V20A2 2 0 0 1 11 22H4A2 2 0 0 1 2 20V8.500A2 2 0 0 1 4 6.500zM8.500 6.500V11H13"/></svg>
<span class="t" style="left:127.0px;top:1538.9px;font-size:24px;color:#b5b5b5;letter-spacing:0.7px;">1 Tab</span>
<i style="position:absolute;left:205px;top:1530.500px;width:144px;height:39px;border-radius:8px;border:2px dashed #484848"></i>
<svg style="left:219px;top:1540px;fill:none;stroke:#7f7f7f;stroke-width:2;stroke-linecap:round" width="20" height="20" viewBox="0 0 20 20"><path d="M10 1V19M1 10H19"/></svg>
<span class="t" style="left:247.0px;top:1538.9px;font-size:24px;color:#7f7f7f;letter-spacing:0.7px;">Browser</span>
<i style="position:absolute;left:593px;top:1534.500px;width:116.500px;height:31px;border-radius:8px;background:#292929"></i>
<span class="t" style="left:601.4px;top:1538.4px;font-size:23px;color:#7a7a7a;letter-spacing:0.5px;">31.3%</span>
<svg style="left:678px;top:1538px;fill:none;stroke-width:3" width="28" height="28" viewBox="0 0 28 28"><circle cx="14" cy="12.500" r="10.500" stroke="#555"/><path d="M14 2A10.500 10.500 0 0 1 24 9.500" stroke="#9a9a9a" stroke-linecap="round"/></svg>
<span class="t" style="left:38.7px;top:1589.5px;font-size:26px;color:#6a6a6a;letter-spacing:0.46px;">Plan, @ for context, / for commands</span>
<i style="position:absolute;left:38.400px;top:1664px;width:191.500px;height:40px;border-radius:20px;background:#383838"></i>
<svg style="left:53px;top:1675px;fill:none;stroke:#a0a0a0;stroke-width:2.400" width="28" height="18" viewBox="0 0 28 18"><path d="M14 9C11.500 5 9.500 3 7 3A6 6 0 0 0 7 15C9.500 15 11.500 13 14 9C16.500 5 18.500 3 21 3A6 6 0 0 1 21 15C18.500 15 16.500 13 14 9z"/></svg>
<span class="t" style="left:88.5px;top:1672.4px;font-size:24px;color:#a8a8a8;letter-spacing:0.7px;">Agent</span>
<span class="t" style="left:163.5px;top:1675.8px;font-size:21px;color:#777;font-family:'DejaVu Sans Mono','Liberation Mono',monospace;letter-spacing:-1px;">⌘I</span>
<svg class="chev" style="left:200px;top:1677px;stroke:#a0a0a0;stroke-width:2.200" width="16" height="12" viewBox="0 0 16 12"><path d="M2 9.500L8 3L14 9.500"/></svg>
<span class="t" style="left:246.8px;top:1672.4px;font-size:24px;color:#8f8f8f;letter-spacing:0.6px;">Auto</span>
<svg class="chev" style="left:308px;top:1677px;stroke:#8f8f8f;stroke-width:2.200" width="16" height="12" viewBox="0 0 16 12"><path d="M2 9.500L8 3L14 9.500"/></svg>
<svg style="left:623px;top:1672px;fill:none;stroke:#8f8f8f;stroke-width:2.200;stroke-linejoin:round" width="26" height="22" viewBox="0 0 26 22"><rect x="1.500" y="2" width="23" height="17" rx="2.500"/><circle cx="8" cy="8" r="2" fill="#8f8f8f" stroke="none"/><path d="M2 17L9 11.500L13 15L17.500 10.500L24 16.500"/></svg>
<i style="position:absolute;left:669.500px;top:1664px;width:40px;height:40px;border-radius:50%;background:#575757"></i>
<svg style="left:679px;top:1673px;fill:none;stroke:#2d2d2d;stroke-width:2.400;stroke-linecap:round;stroke-linejoin:round" width="22" height="22" viewBox="0 0 22 22"><path d="M11 19.500V3M4 9.500L11 2.500L18 9.500"/></svg>
</div>
<div id="status">
<i style="position:absolute;left:0;top:0;width:68px;height:42px;background:#0078d4;border-bottom-left-radius:22px"></i>
<svg style="left:20px;top:5px;fill:none;stroke:#fff;stroke-width:2.200;stroke-linecap:butt;stroke-linejoin:miter" width="30" height="30" viewBox="0 0 30 30"><path d="M5.500 11.500L13 18.200L5.500 25.500M22.500 4.500L15 11.300L22.500 18.200"/></svg>
<svg style="left:85px;top:7.500px;fill:none;stroke:#ccc;stroke-width:2" width="26" height="26" viewBox="0 0 26 26"><circle cx="13" cy="13" r="11"/><path d="M8 8L18 18M18 8L8 18"/></svg>
<span class="t" style="left:119.500px;top:9px;font-size:24px;color:#ccc">0</span>
<svg style="left:141px;top:7px;fill:none;stroke:#ccc;stroke-width:2;stroke-linejoin:round" width="28" height="26" viewBox="0 0 28 26"><path d="M13.700 2.500L25 22.500H2.500z"/><path d="M13.700 9.500V16.500" style="stroke-width:2.400"/><circle cx="13.700" cy="19.300" r="1.300" fill="#ccc" stroke="none"/></svg>
<span class="t" style="left:176.500px;top:9px;font-size:24px;color:#ccc">0</span>
<span class="t" style="left:2042.500px;top:9px;font-size:24px;color:#ccc;letter-spacing:.600px">Cursor Tab</span>
<span class="t tj" style="left:2199px;top:11px;font-size:24px;color:#ccc;letter-spacing:.600px">行 17、列 32</span>
<span class="t tj" style="left:2378px;top:11px;font-size:24px;color:#ccc;letter-spacing:0">スペース: 2</span>
<span class="t" style="left:2529px;top:9px;font-size:24px;color:#ccc;letter-spacing:.600px">UTF-8</span>
<span class="t" style="left:2634.500px;top:9px;font-size:24px;color:#ccc;letter-spacing:.600px">LF</span>
<span class="t" style="left:2692.500px;top:6.500px;font-size:24px;color:#ccc;letter-spacing:6px">{}</span>
<span class="t" style="left:2730px;top:9px;font-size:24px;color:#ccc;letter-spacing:.100px">YAML</span>
<svg style="left:2820px;top:6px;fill:none;stroke:#ccc;stroke-width:1.900;stroke-linecap:round;stroke-linejoin:round" width="32" height="30" viewBox="2820 1750 32 30"><path d="M2830.200 1756.200L2831 1752.600L2833.400 1755.600C2836 1756 2837.200 1758 2837 1760.500C2839 1762.500 2840.500 1765 2840.500 1768C2840.500 1771 2839 1773.500 2841 1775.700H2826.200C2826.200 1773.800 2827.500 1773 2829.500 1773.200C2828.800 1772 2828.500 1771.200 2828.800 1770.200L2825.800 1770.800C2824.600 1769.800 2825 1768.300 2826.500 1768L2829.500 1767.200L2829 1765.200L2824.400 1762.800C2824.600 1760 2826.500 1757.200 2830.200 1756.200z"/><path d="M2841 1775.700C2845.500 1774.500 2846.500 1770.500 2844 1767C2842.500 1765 2844 1762.500 2846 1763.200C2848.200 1760.500 2847 1756 2843.800 1754.200C2840.500 1752.500 2836.500 1754 2835.200 1757"/><circle cx="2828.600" cy="1759.800" r=".900" fill="#ccc" stroke="none"/></svg>
<svg style="left:2882px;top:6px;fill:none;stroke:#ccc;stroke-width:1.900;stroke-linecap:round;stroke-linejoin:round" width="32" height="32" viewBox="2882 1750 32 32"><path d="M2898 1755.300C2892.500 1754.800 2889.300 1758.500 2889.200 1763L2889 1768L2886.600 1772.300H2906L2904.500 1769.500L2904.300 1765"/><path d="M2893.800 1773C2894.500 1776.300 2898.500 1776.300 2899.200 1773" fill="#ccc"/><circle cx="2903" cy="1757.700" r="5.200" fill="#ccc" stroke="none"/></svg>
<i style="position:absolute;right:0;bottom:0;width:24px;height:24px;background:radial-gradient(circle at 0 0,transparent 23px,#101010 24px)"></i>
</div>

</div>
</body></html>
